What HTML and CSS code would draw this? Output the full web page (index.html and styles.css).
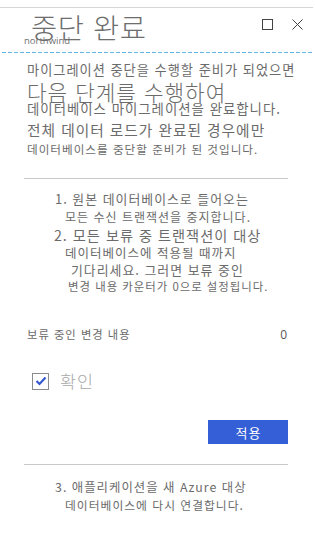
FILE: index.html
```html
<!DOCTYPE html>
<html lang="ko">
<head>
<meta charset="utf-8">
<title>중단 완료</title>
<link rel="stylesheet" href="styles.css">
</head>
<body>
<div class="panel">
  <header class="header">
    <h1 class="title">중단 완료</h1>
    <span class="brand">northwind</span>
    <div class="actions">
      <svg class="icon" width="11" height="11" viewBox="0 0 11 11"><rect x="0.5" y="0.5" width="10" height="10" fill="none" stroke="#444" stroke-width="1"/></svg>
      <svg class="icon" width="11" height="11" viewBox="0 0 11 11"><path d="M0.5 0.5 L10.5 10.5 M10.5 0.5 L0.5 10.5" stroke="#444" stroke-width="1" fill="none"/></svg>
    </div>
  </header>
  <div class="dash"></div>

  <section class="intro">
    <div class="l l1">마이그레이션 중단을 수행할 준비가 되었으면</div>
    <div class="l l2">다음 단계를 수행하여</div>
    <div class="l l3">데이터베이스 마이그레이션을 완료합니다.</div>
    <div class="l l4">전체 데이터 로드가 완료된 경우에만</div>
    <div class="l l5">데이터베이스를 중단할 준비가 된 것입니다.</div>
  </section>

  <hr class="rule rule-a">

  <section class="steps">
    <div class="l s1">1. 원본 데이터베이스로 들어오는</div>
    <div class="l s2">모든 수신 트랜잭션을 중지합니다.</div>
    <div class="l s3">2. 모든 보류 중 트랜잭션이 대상</div>
    <div class="l s4">데이터베이스에 적용될 때까지</div>
    <div class="l s5">기다리세요. 그러면 보류 중인</div>
    <div class="l s6">변경 내용 카운터가 0으로 설정됩니다.</div>
  </section>

  <div class="pending">
    <span class="pending-label">보류 중인 변경 내용</span>
    <span class="pending-count">0</span>
  </div>

  <label class="confirm">
    <span class="box">
      <svg width="12" height="10" viewBox="0 0 12 10"><path d="M1.5 5 L4.5 8 L10.5 1.5" fill="none" stroke="#3558d0" stroke-width="2.2" stroke-linejoin="miter"/></svg>
    </span>
    <span class="confirm-text">확인</span>
  </label>

  <div class="btn-row">
    <button class="apply">적용</button>
  </div>

  <hr class="rule rule-b">

  <section class="final">
    <div class="l f1">3. 애플리케이션을 새 Azure 대상</div>
    <div class="l f2">데이터베이스에 다시 연결합니다.</div>
  </section>
</div>
</body>
</html>
```

FILE: styles.css
```css
* { box-sizing: border-box; }
html, body { margin: 0; padding: 0; background: #fff; }
body {
  font-family: "Noto Sans CJK KR", "Noto Sans", sans-serif;
  color: #6b6b6b;
  width: 315px;
  height: 560px;
  overflow: hidden;
}
.panel { width: 313px; }

.header {
  position: relative;
  margin-top: 7px;
  border-top: 1px solid #d6d6d6;
  height: 45px;
  display: flex;
  align-items: flex-start;
  padding: 3px 10px 0 31px;
}
.title {
  margin: 0;
  font-weight: 300;
  font-size: 28.5px;
  line-height: 32px;
  color: #6e6e6e;
  letter-spacing: 0.5px;
}
.brand {
  position: absolute;
  left: 24px;
  top: 27px;
  font-family: "Open Sans", "Liberation Sans", sans-serif;
  font-size: 9.5px;
  line-height: 12px;
  color: #707070;
}
.actions {
  margin-left: auto;
  margin-top: 8px;
  display: flex;
  gap: 19px;
}
.icon { display: block; }
.dash {
  height: 1px;
  background: repeating-linear-gradient(to right, #63b6e8 0 4px, transparent 4px 6px);
  margin-left: 2px;
}

.l { white-space: nowrap; letter-spacing: 1px; }

.intro { padding-left: 27px; margin-top: 8px; }
.l1 { font-size: 13.2px; line-height: 18px; }
.l2 { font-size: 21.3px; line-height: 26px; font-weight: 300; }
.l3 { font-size: 13.4px; line-height: 18px; margin-top: -6px; }
.l4 { font-size: 14.7px; line-height: 26px; }
.l5 { font-size: 11.6px; line-height: 12px; }

.rule {
  border: 0;
  height: 1px;
  background: #c8c8c8;
  margin: 0 25px 0 24px;
}
.rule-a { margin-top: 23px; }

.steps { margin-top: 11px; }
.s1 { font-size: 12.9px; line-height: 18px; padding-left: 55px; }
.s2 { font-size: 12px; line-height: 18px; padding-left: 65px; }
.s3 { font-size: 14.2px; line-height: 18px; padding-left: 54px; }
.s4 { font-size: 12.5px; line-height: 17px; padding-left: 65px; }
.s5 { font-size: 12.9px; line-height: 17px; padding-left: 71px; }
.s6 { font-size: 11.4px; line-height: 17px; padding-left: 68px; }

.pending {
  margin-top: 30px;
  display: flex;
  justify-content: space-between;
  align-items: center;
  padding: 0 26px 0 27px;
  height: 18px;
}
.pending-label {
  font-size: 11.3px;
  letter-spacing: 1px;
}
.pending-count {
  font-family: "Open Sans", "Liberation Sans", sans-serif;
  font-size: 12px;
  color: #555;
}

.confirm {
  margin-top: 29px;
  display: flex;
  align-items: center;
  gap: 11px;
  padding-left: 32px;
  height: 18px;
}
.box {
  width: 17px;
  height: 17px;
  border: 1.5px solid #8c8c8c;
  display: flex;
  align-items: center;
  justify-content: center;
}
.box svg { display: block; }
.confirm-text {
  font-size: 17.4px;
  line-height: 18px;
  letter-spacing: 1px;
  color: #a8a8a8;
  font-weight: 300;
}

.btn-row {
  margin-top: 30px;
  display: flex;
  justify-content: flex-end;
  padding-right: 25px;
}
.apply {
  width: 80px;
  height: 24px;
  border: 0;
  background: #355fd6;
  color: #fff;
  font-family: "Noto Sans CJK KR", sans-serif;
  font-size: 13px;
  letter-spacing: 1px;
  padding: 0 0 0 1px;
}

.rule-b { margin-top: 20px; }

.final { margin-top: 13px; }
.f1 { font-size: 12.4px; line-height: 18px; padding-left: 55px; }
.f2 { font-size: 11.8px; line-height: 17px; padding-left: 65px; }
```
